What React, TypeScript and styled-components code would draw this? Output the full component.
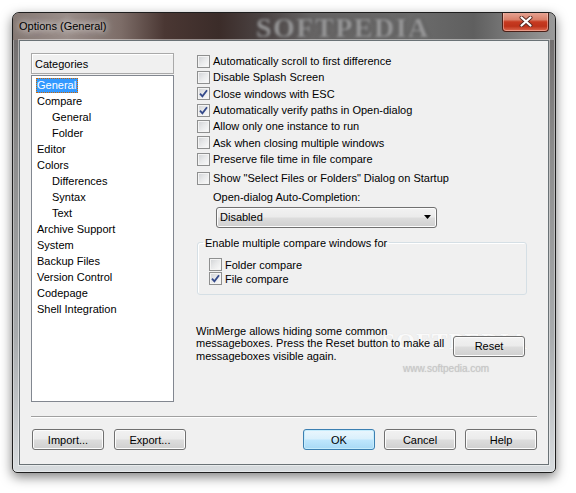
import React from "react";
import styled, { createGlobalStyle } from "styled-components";

const GlobalStyle = createGlobalStyle`
  html, body {
    margin: 0;
    background: #ffffff;
    font-family: "Liberation Sans", Arial, sans-serif;
    font-size: 11px;
    color: #000;
  }
`;

const Page = styled.div`
  width: 576px;
  height: 493px;
  box-sizing: border-box;
  padding: 12px 0 0 12px;
`;

const Window = styled.div`
  width: 544px;
  height: 461px;
  box-sizing: border-box;
  border: 1px solid #1e1e1e;
  border-radius: 7px 7px 5px 5px;
  background: linear-gradient(to bottom, #6c6868 0%, #8c8c8c 30%, #a8abad 70%, #d8dcdf 100%);
  box-shadow: 0 4px 12px rgba(0, 0, 0, 0.5), inset 0 0 0 1px rgba(255, 255, 255, 0.35);
  display: flex;
  flex-direction: column;
  padding: 0 6px 7px 6px;
  overflow: hidden;
`;

const TitleBar = styled.div`
  position: relative;
  height: 27px;
  margin: 0 -6px;
  padding: 0 6px;
  display: flex;
  justify-content: space-between;
  align-items: flex-start;
  background: linear-gradient(
    to right,
    #857873 0%,
    #9a8e8a 10%,
    #7c6c67 20%,
    #4a3733 28%,
    #3b2c29 38%,
    #4b4343 46%,
    #666464 55%,
    #6a6a6a 75%,
    #5f5f5f 85%,
    #9a9a9a 100%
  );
`;

const Title = styled.div`
  position: relative;
  z-index: 1;
  margin-top: 6px;
  font-size: 11px;
  line-height: 14px;
  color: #000;
  text-shadow: 0 0 6px rgba(255, 255, 255, 0.9), 0 0 10px rgba(255, 255, 255, 0.6);
`;

const TitleMark = styled.div`
  position: absolute;
  left: 243px;
  top: 1px;
  font-family: "Liberation Serif", serif;
  font-weight: bold;
  font-size: 28px;
  line-height: 27px;
  letter-spacing: 1.5px;
  color: rgba(170, 170, 172, 0.85);
  text-shadow: 0 0 3px rgba(40, 40, 40, 0.8);
  filter: blur(1.4px);
  pointer-events: none;
`;

const CloseButton = styled.div`
  position: relative;
  z-index: 1;
  width: 47px;
  height: 20px;
  box-sizing: border-box;
  margin-top: -1px;
  border: 1px solid #4a2018;
  border-top: none;
  border-radius: 0 0 4px 4px;
  background: linear-gradient(to bottom, #e8a898 0%, #d9806a 40%, #c73a20 52%, #bd321a 75%, #de6a50 100%);
  box-shadow: inset 0 0 0 1px rgba(255, 220, 210, 0.45);
  display: flex;
  align-items: center;
  justify-content: center;
`;

const Client = styled.div`
  position: relative;
  flex: 1;
  background: #f0f0f0;
  border: 1px solid #6a7276;
  box-shadow: 0 0 0 1px rgba(255, 255, 255, 0.45);
  padding: 12px 11px 0 11px;
  display: flex;
  flex-direction: column;
`;

const Main = styled.div`
  display: flex;
  height: 349px;
`;

const LeftColumn = styled.div`
  width: 143px;
  display: flex;
  flex-direction: column;
`;

const CategoryHeader = styled.div`
  height: 21px;
  box-sizing: border-box;
  border: 1px solid #a9a9a9;
  box-shadow: inset 1px 1px 0 #ffffff;
  padding-left: 3px;
  display: flex;
  align-items: center;
`;

const CategoryList = styled.div`
  margin-top: 1px;
  flex: 1;
  background: #ffffff;
  border: 1px solid #828790;
  padding: 1px 0 0 4px;
`;

const TreeRow = styled.div<{ $level: number }>`
  height: 16px;
  display: flex;
  align-items: center;
  padding-left: ${(p) => p.$level * 15}px;
`;

const TreeLabel = styled.span<{ $selected?: boolean }>`
  height: 15px;
  box-sizing: border-box;
  line-height: 13px;
  padding: 0 1px 0 0;
  border: 1px ${(p) => (p.$selected ? "dotted #cc6600" : "solid transparent")};
  background: ${(p) => (p.$selected ? "#3399ff" : "transparent")};
  color: ${(p) => (p.$selected ? "#ffffff" : "#000000")};
`;

const RightPanel = styled.div`
  flex: 1;
  margin-left: 22px;
  padding-right: 10px;
  display: flex;
  flex-direction: column;
`;

const CheckRow = styled.div<{ $height?: number; $gapTop?: number }>`
  height: ${(p) => p.$height ?? 16.33}px;
  margin-top: ${(p) => p.$gapTop ?? 0}px;
  display: flex;
  align-items: center;
  gap: 3px;
  padding-left: 1px;
`;

const Box = styled.span`
  width: 13px;
  height: 13px;
  box-sizing: border-box;
  flex-shrink: 0;
  border: 1px solid #8e8f8f;
  background: linear-gradient(135deg, #cfd1d4 0%, #e9eaeb 50%, #fbfbfb 100%);
  box-shadow: inset 0 0 0 1px #f4f4f4;
  display: flex;
  align-items: center;
  justify-content: center;
`;

const FieldLabel = styled.div`
  margin-top: 3px;
  padding-left: 17px;
  line-height: 14px;
`;

const Combo = styled.div`
  margin: 3px 0 0 20px;
  width: 221px;
  height: 21px;
  box-sizing: border-box;
  border: 1px solid #707070;
  border-radius: 3px;
  background: linear-gradient(to bottom, #f2f2f2 0%, #ebebeb 48%, #dddddd 52%, #cfcfcf 100%);
  box-shadow: inset 0 0 0 1px #fcfcfc;
  display: flex;
  align-items: center;
  justify-content: space-between;
  padding: 0 5px 0 3px;
`;

const GroupBox = styled.fieldset`
  margin: 8px 0 0 1px;
  padding: 8px 10px 8px 10px;
  border: 1px solid #d5dfe5;
  border-radius: 3px;
  box-shadow: inset 1px 1px 0 #ffffff;
  min-width: 0;
`;

const GroupLegend = styled.legend`
  margin-left: -5px;
  padding: 0 2px;
  line-height: 14px;
`;

const NoteRow = styled.div`
  position: relative;
  z-index: 1;
  margin-top: 30px;
  display: flex;
  align-items: flex-start;
  justify-content: space-between;
`;

const Note = styled.div`
  line-height: 12.5px;
`;

const Button = styled.button<{ $default?: boolean }>`
  width: 72px;
  height: 21px;
  box-sizing: border-box;
  padding: 0;
  font-family: "Liberation Sans", Arial, sans-serif;
  font-size: 11px;
  color: #000;
  border: 1px solid ${(p) => (p.$default ? "#3c7fb1" : "#707070")};
  border-radius: 3px;
  background: ${(p) =>
    p.$default
      ? "linear-gradient(to bottom, #eaf6fd 0%, #d9f0fc 48%, #bee6fd 52%, #a7d9f5 100%)"
      : "linear-gradient(to bottom, #f2f2f2 0%, #ebebeb 48%, #dddddd 52%, #cfcfcf 100%)"};
  box-shadow: inset 0 0 0 1px ${(p) => (p.$default ? "#c5ecfc" : "#fcfcfc")};
`;

const ResetButton = styled(Button)`
  margin: 11px 2px 0 0;
`;

const Separator = styled.div`
  margin-top: 14px;
  border-top: 1px solid #a0a0a0;
  border-bottom: 1px solid #ffffff;
`;

const ButtonBar = styled.div`
  margin-top: 11px;
  display: flex;
  gap: 10px;
  padding-left: 1px;
`;

const ButtonGroup = styled.div`
  margin-left: auto;
  display: flex;
  gap: 9px;
`;

const BigMark = styled.div`
  position: absolute;
  left: 362px;
  top: 287px;
  font-family: "Liberation Serif", serif;
  font-weight: bold;
  font-size: 24px;
  letter-spacing: 1px;
  color: rgba(255, 255, 255, 0.9);
  text-shadow: 0 0 1px rgba(150, 150, 150, 0.25);
  pointer-events: none;
`;

const SmallMark = styled.div`
  position: absolute;
  left: 383px;
  top: 322px;
  font-size: 10px;
  color: #c8c8c8;
  text-shadow: 0 0 1px rgba(150, 150, 150, 0.4);
  pointer-events: none;
`;

const CheckMark = () => (
  <svg width="9" height="9" viewBox="0 0 9 9">
    <path d="M1 4.6 L3.4 7.4 L8 1.2" fill="none" stroke="#34498a" strokeWidth="1.8" />
  </svg>
);

const Checkbox: React.FC<{ checked?: boolean }> = ({ checked }) => (
  <Box>{checked && <CheckMark />}</Box>
);

const categories: { label: string; level: number }[] = [
  { label: "General", level: 0 },
  { label: "Compare", level: 0 },
  { label: "General", level: 1 },
  { label: "Folder", level: 1 },
  { label: "Editor", level: 0 },
  { label: "Colors", level: 0 },
  { label: "Differences", level: 1 },
  { label: "Syntax", level: 1 },
  { label: "Text", level: 1 },
  { label: "Archive Support", level: 0 },
  { label: "System", level: 0 },
  { label: "Backup Files", level: 0 },
  { label: "Version Control", level: 0 },
  { label: "Codepage", level: 0 },
  { label: "Shell Integration", level: 0 },
];

const options: { label: string; checked: boolean }[] = [
  { label: "Automatically scroll to first difference", checked: false },
  { label: "Disable Splash Screen", checked: false },
  { label: "Close windows with ESC", checked: true },
  { label: "Automatically verify paths in Open-dialog", checked: true },
  { label: "Allow only one instance to run", checked: false },
  { label: "Ask when closing multiple windows", checked: false },
  { label: "Preserve file time in file compare", checked: false },
];

export default function App() {
  return (
    <Page>
      <GlobalStyle />
      <Window>
        <TitleBar>
          <Title>Options (General)</Title>
          <TitleMark>SOFTPEDIA</TitleMark>
          <CloseButton>
            <svg width="14" height="11" viewBox="0 0 14 11">
              <path d="M2.5 1.5 L11.5 9.5 M11.5 1.5 L2.5 9.5" stroke="#5a2a22" strokeWidth="4" strokeLinecap="round" />
              <path d="M2.5 1.5 L11.5 9.5 M11.5 1.5 L2.5 9.5" stroke="#ffffff" strokeWidth="2.2" strokeLinecap="round" />
            </svg>
          </CloseButton>
        </TitleBar>
        <Client>
          <BigMark>SOFTPEDIA</BigMark>
          <SmallMark>www.softpedia.com</SmallMark>
          <Main>
            <LeftColumn>
              <CategoryHeader>Categories</CategoryHeader>
              <CategoryList>
                {categories.map((c, i) => (
                  <TreeRow key={i} $level={c.level}>
                    <TreeLabel $selected={i === 0}>{c.label}</TreeLabel>
                  </TreeRow>
                ))}
              </CategoryList>
            </LeftColumn>
            <RightPanel>
              {options.map((o) => (
                <CheckRow key={o.label}>
                  <Checkbox checked={o.checked} />
                  <span>{o.label}</span>
                </CheckRow>
              ))}
              <CheckRow $gapTop={3}>
                <Checkbox />
                <span>Show "Select Files or Folders" Dialog on Startup</span>
              </CheckRow>
              <FieldLabel>Open-dialog Auto-Completion:</FieldLabel>
              <Combo>
                <span>Disabled</span>
                <svg width="7" height="4" viewBox="0 0 7 4">
                  <path d="M0 0 H7 L3.5 4 Z" fill="#000" />
                </svg>
              </Combo>
              <GroupBox>
                <GroupLegend>Enable multiple compare windows for</GroupLegend>
                <CheckRow $height={14}>
                  <Checkbox />
                  <span>Folder compare</span>
                </CheckRow>
                <CheckRow $height={14}>
                  <Checkbox checked />
                  <span>File compare</span>
                </CheckRow>
              </GroupBox>
              <NoteRow>
                <Note>
                  WinMerge allows hiding some common
                  <br />
                  messageboxes. Press the Reset button to make all
                  <br />
                  messageboxes visible again.
                </Note>
                <ResetButton>Reset</ResetButton>
              </NoteRow>
            </RightPanel>
          </Main>
          <Separator />
          <ButtonBar>
            <Button>Import...</Button>
            <Button>Export...</Button>
            <ButtonGroup>
              <Button $default>OK</Button>
              <Button>Cancel</Button>
              <Button>Help</Button>
            </ButtonGroup>
          </ButtonBar>
        </Client>
      </Window>
    </Page>
  );
}
